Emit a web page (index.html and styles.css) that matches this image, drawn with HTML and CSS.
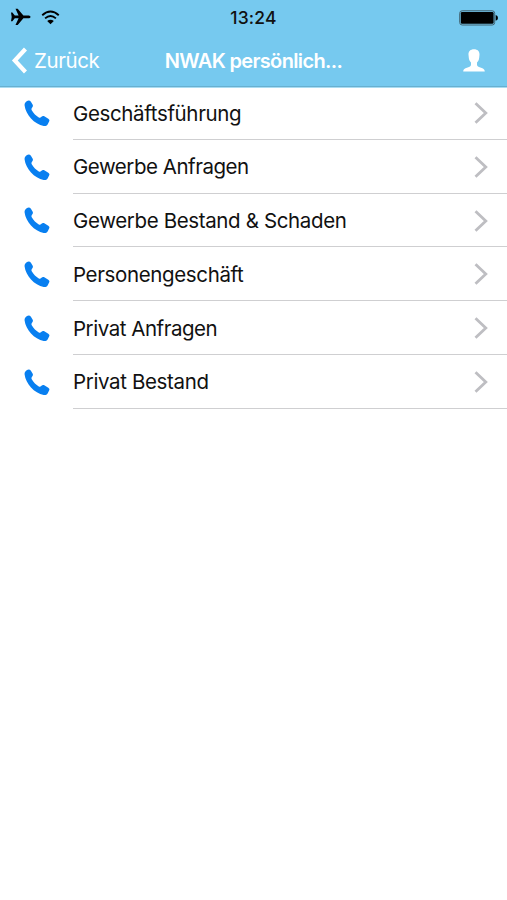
FILE: index.html
```html
<!DOCTYPE html>
<html lang="de">
<head>
<meta charset="utf-8">
<title>NWAK persönlich</title>
<link rel="stylesheet" href="styles.css">
</head>
<body>
<svg width="0" height="0" class="defs" aria-hidden="true">
  <symbol id="phone" viewBox="0 0 26 27"><path d="M3 1.100C4.500 .2 6 .5 6.900 1.800L8.700 4.800C9.200 5.900 8.900 6.800 8 7.700C7.300 8.600 7.300 9.500 7.900 10.500C9.500 13.200 12 15.900 14.800 17.400C15.700 17.900 16.500 17.700 17.200 17C18.200 16 19.200 15.700 20.300 16.300L24.300 18.700C25.500 19.500 25.700 20.500 25.100 21.600L23.600 24.400C22.700 25.800 21.400 26.300 19.700 26C15 25.200 10.500 22.300 7 18.500C3.600 14.700 1.200 10.200 .6 5.600C.4 3.600 1.200 2.200 3 1.100Z"/></symbol>
  <symbol id="chevron" viewBox="0 0 14 22"><path d="M1.500 1.200L11.800 11L1.500 20.800"/></symbol>
</svg>
<header class="header">
  <div class="status">
    <div class="signals">
      <svg class="plane" viewBox="0 0 20 18"><path d="M0 4.600H1.400L3.800 7.500H7.600L4.500 .8H6.700L12.400 7.500H17.200C18.500 7.500 19.500 8.100 19.500 8.900S18.500 10.300 17.200 10.300H12.400L6.700 17H4.500L7.600 10.300H3.800L1.400 13.200H0L.7 8.900Z"/></svg>
      <svg class="wifi" viewBox="0 0 20 15"><path class="arc" d="M1.300 5.100Q10-2.700 18.700 5.100M4.300 8.400Q10 3.400 15.700 8.400"/><path d="M6.500 11.100Q10 8.500 13.500 11.100L10 14.500Z"/></svg>
    </div>
    <time class="clock">13:24</time>
    <svg class="battery" viewBox="0 0 40 16"><rect class="shell" x=".7" y=".8" width="35" height="14.200" rx="2.500"/><rect x="1.800" y="2" width="32.800" height="11.800" rx="1.300"/><path d="M36.700 5Q39 5.700 39 7.900T36.700 10.800Z"/></svg>
  </div>
  <nav class="nav">
    <a class="back"><svg class="back-icon" viewBox="0 0 16 27"><path d="M14.500 2L3.800 13.500L14.500 25"/></svg><span>Zurück</span></a>
    <h1 class="title">NWAK persönlich...</h1>
    <svg class="user" viewBox="0 0 22 23"><path d="M11 .3C14.600 .3 16.700 2.400 16.500 5.800L16.200 8.700C16 10.700 15.200 12.200 14 13.400V16C14.500 19 21.800 18 21.800 22.600H.2C.2 18 7.500 19 8 16V13.400C6.800 12.200 6 10.700 5.800 8.700L5.500 5.800C5.300 2.400 7.400 .3 11 .3Z"/></svg>
  </nav>
</header>
<main class="list">
  <div class="row"><svg class="phone"><use href="#phone"/></svg><div class="cell"><span>Geschäftsführung</span><svg class="chevron"><use href="#chevron"/></svg></div></div>
  <div class="row"><svg class="phone"><use href="#phone"/></svg><div class="cell"><span class="tight">Gewerbe Anfragen</span><svg class="chevron"><use href="#chevron"/></svg></div></div>
  <div class="row"><svg class="phone"><use href="#phone"/></svg><div class="cell"><span>Gewerbe Bestand &amp; Schaden</span><svg class="chevron"><use href="#chevron"/></svg></div></div>
  <div class="row"><svg class="phone"><use href="#phone"/></svg><div class="cell"><span>Personengeschäft</span><svg class="chevron"><use href="#chevron"/></svg></div></div>
  <div class="row"><svg class="phone"><use href="#phone"/></svg><div class="cell"><span class="tight">Privat Anfragen</span><svg class="chevron"><use href="#chevron"/></svg></div></div>
  <div class="row"><svg class="phone"><use href="#phone"/></svg><div class="cell"><span>Privat Bestand</span><svg class="chevron"><use href="#chevron"/></svg></div></div>
</main>
</body>
</html>
```
FILE: styles.css
```css
* { box-sizing: border-box; }
body { margin: 0; min-height: 900px; background: #fff; color: #111; font-family: Inter, "Liberation Sans", sans-serif; }
svg { display: block; flex: none; }
.defs { display: none; }
.header { height: 88px; background: #76c9ef; border-bottom: 1px solid #a9dcf2; box-shadow: inset 0 -1px #68b0d0; }
.status { height: 35px; display: grid; grid-template-columns: 1fr auto 1fr; align-items: center; padding: 0 8px 0 11px; }
.signals { display: flex; align-items: center; gap: 10px; padding-bottom: 1px; }
.plane { width: 20px; height: 18px; }
.wifi { width: 19px; height: 15px; }
.arc { fill: none; stroke: #000; stroke-width: 2; }
.clock { font-size: 17.5px; font-weight: 500; line-height: 35px; letter-spacing: .2px; margin-right: 3px; }
.battery { width: 40px; height: 16px; justify-self: end; }
.shell { fill: none; stroke: #41606e; stroke-width: 1; }
.nav { height: 52px; display: grid; grid-template-columns: 1fr auto 1fr; align-items: center; padding: 0 22px 0 11px; color: #fff; }
.back { display: flex; align-items: center; gap: 7px; padding-bottom: 1px; font-size: 20.5px; letter-spacing: -.4px; }
.back-icon { width: 16px; height: 27px; fill: none; stroke: #fff; stroke-width: 4.200; }
.title { margin: 0 0 0 11px; font-size: 20px; font-weight: 600; letter-spacing: -.65px; }
.user { width: 22px; height: 23px; fill: #fff; justify-self: end; margin-bottom: 1px; }
.list { margin-top: -2px; }
.row { height: 53.750px; display: flex; align-items: center; padding-left: 24px; }
.phone { width: 26px; height: 27px; fill: #087ff0; margin-top: 1px; }
.cell { flex: 1; height: 100%; margin-left: 23px; padding: 1.500px 19px 0 0; display: flex; align-items: center; justify-content: space-between; border-bottom: 1px solid #cfcfd1; font-size: 20.5px; letter-spacing: -.36px; }
.tight { letter-spacing: -.47px; }
.chevron { width: 14px; height: 22px; fill: none; stroke: #bebec2; stroke-width: 2.800; }
```
